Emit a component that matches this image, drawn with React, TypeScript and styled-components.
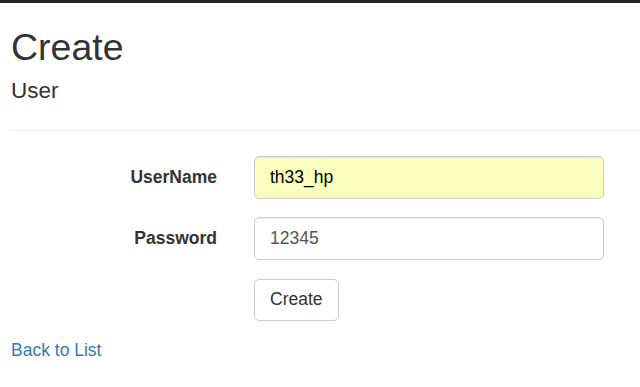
import React from 'react';
import styled, { createGlobalStyle } from 'styled-components';

const GlobalStyle = createGlobalStyle`
  html, body {
    margin: 0;
    padding: 0;
    background: #fff;
  }
  body {
    font-family: "Liberation Sans", Arial, Helvetica, sans-serif;
    font-size: 17.5px;
    line-height: 25px;
    color: #333;
  }
`;

const TopBar = styled.div`
  height: 3px;
  background-color: #222;
`;

const Page = styled.div`
  padding: 24px 0 0 11px;
`;

const Title = styled.h2`
  margin: 0;
  font-size: 37.5px;
  font-weight: 500;
  line-height: 1.1;
`;

const Subtitle = styled.h4`
  margin: 11px 0 0;
  font-size: 22.5px;
  font-weight: 500;
  line-height: 1.1;
`;

const Divider = styled.hr`
  margin: 26px 0 25px;
  border: 0;
  border-top: 1px solid #eee;
`;

const Form = styled.form`
  display: flex;
  flex-direction: column;
  gap: 18.75px;
`;

const FormGroup = styled.div`
  display: grid;
  grid-template-columns: 206px 350px;
  column-gap: 37px;
`;

const Label = styled.label`
  grid-column: 1;
  padding-top: 8.75px;
  text-align: right;
  font-weight: bold;
`;

const Input = styled.input<{ autofilled?: boolean }>`
  grid-column: 2;
  box-sizing: border-box;
  width: 350px;
  height: 42.5px;
  padding: 7.5px 15px;
  font-family: inherit;
  font-size: 17.5px;
  line-height: 25px;
  color: ${(props) => (props.autofilled ? '#000' : '#555')};
  background-color: ${(props) => (props.autofilled ? '#faffbd' : '#fff')};
  border: 1px solid #ccc;
  border-radius: 5px;
  box-shadow: inset 0 1px 1px rgba(0, 0, 0, 0.075);
  outline: none;
`;

const Button = styled.button`
  grid-column: 2;
  justify-self: start;
  box-sizing: border-box;
  height: 42.5px;
  padding: 7.5px 15px;
  font-family: inherit;
  font-size: 17.5px;
  line-height: 25px;
  color: #333;
  background-color: #fff;
  border: 1px solid #ccc;
  border-radius: 5px;
  cursor: pointer;
`;

const Footer = styled.div`
  margin-top: 16.5px;
`;

const BackLink = styled.a`
  color: #337ab7;
  text-decoration: none;
`;

export default function App() {
  return (
    <>
      <GlobalStyle />
      <TopBar />
      <Page>
        <Title>Create</Title>
        <Subtitle>User</Subtitle>
        <Divider />
        <Form onSubmit={(e) => e.preventDefault()}>
          <FormGroup>
            <Label htmlFor="UserName">UserName</Label>
            <Input id="UserName" autofilled defaultValue="th33_hp" />
          </FormGroup>
          <FormGroup>
            <Label htmlFor="Password">Password</Label>
            <Input id="Password" defaultValue="12345" />
          </FormGroup>
          <FormGroup>
            <Button type="submit">Create</Button>
          </FormGroup>
        </Form>
        <Footer>
          <BackLink href="#">Back to List</BackLink>
        </Footer>
      </Page>
    </>
  );
}
